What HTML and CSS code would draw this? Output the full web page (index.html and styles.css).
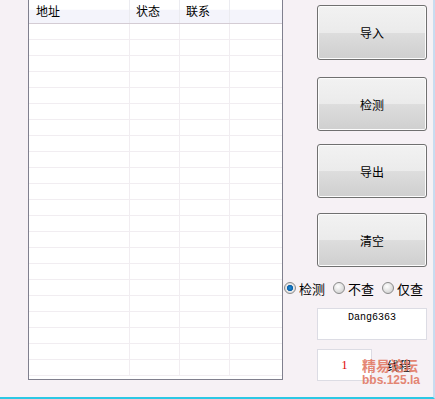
FILE: index.html
```html
<html>
<head>
<title>检测工具</title>
<link rel="stylesheet" href="styles.css">
</head>
<body>
<div class="window">
  <div class="listview">
    <div class="header">
      <div class="col c1">地址</div>
      <div class="col c2">状态</div>
      <div class="col c3">联系</div>
      <div class="col c4"></div>
    </div>
    <div class="rows" id="rows"></div>
  </div>

  <div class="panel">
    <button class="btn b1">导入</button>
    <button class="btn b2">检测</button>
    <button class="btn b3">导出</button>
    <button class="btn b4">清空</button>

    <div class="radios">
      <label class="radio"><span class="dot on"></span>检测</label>
      <label class="radio"><span class="dot"></span>不查</label>
      <label class="radio"><span class="dot"></span>仅查</label>
    </div>

    <div class="textbox">Dang6363</div>

    <div class="threadrow">
      <div class="numbox">1</div>
      <span class="label">线程</span>
    </div>
  </div>

  <div class="watermark">
    <div class="wm1">精易论坛</div>
    <div class="wm2">bbs.125.la</div>
  </div>
</div>

<script>
var rows = document.getElementById("rows");
for (var i = 0; i < 22; i++) {
  var r = document.createElement("div");
  r.className = "row";
  r.innerHTML = '<div class="cell c1"></div><div class="cell c2"></div><div class="cell c3"></div><div class="cell c4"></div>';
  rows.appendChild(r);
}
</script>
</body>
</html>
```

FILE: styles.css
```css
body {
    margin: 0;
    background: #f6f1f5;
    font-family: "Noto Sans CJK SC", sans-serif;
    font-size: 12px;
    color: #000;
}

.window {
    position: relative;
    width: 435px;
    height: 399px;
    display: flex;
    box-sizing: border-box;
    border-right: 2px solid #c8dcf0;
    border-bottom: 2px solid #2cc8e4;
    overflow: hidden;
}

.listview {
    margin-left: 28px;
    width: 255px;
    height: 380px;
    box-sizing: border-box;
    border-left: 1px solid #80808e;
    border-right: 1px solid #80808e;
    border-bottom: 1px solid #80808e;
    background: #fff;
    overflow: hidden;
}

.header {
    display: flex;
    height: 23px;
    border-bottom: 1px solid #d4ccd4;
    background: linear-gradient(#ffffff, #ffffff 40%, #f4f4fb 45%, #f4f4fb);
}

.col {
    box-sizing: border-box;
    height: 23px;
    line-height: 22px;
    padding-left: 7px;
    border-right: 1px solid #ebebf0;
}

.c1 { width: 101px; }
.c2 { width: 50px; }
.c3 { width: 50px; }
.c4 { width: 52px; border-right: none; }

.col.c1 { padding-left: 7px; }
.col.c2 { padding-left: 6px; }
.col.c3 { padding-left: 6px; }

.row {
    display: flex;
    height: 16px;
    border-bottom: 1px solid #f1edf1;
    box-sizing: border-box;
}

.cell {
    box-sizing: border-box;
    height: 15px;
    border-right: 1px solid #f1edf1;
}

.cell.c4 { border-right: none; }

.panel {
    margin-left: 34px;
    width: 110px;
    display: flex;
    flex-direction: column;
}

.btn {
    width: 110px;
    height: 54px;
    border: 1px solid #707070;
    border-radius: 3px;
    background: linear-gradient(#f2f2f2, #ebebeb 50%, #dddddd 51%, #cfcfcf);
    box-shadow: inset 0 0 0 1px #fcfcfc;
    font-family: "Noto Sans CJK SC", sans-serif;
    font-size: 12px;
    color: #000;
    padding: 0;
}

.b1 { margin-top: 5px; height: 55px; }
.b2 { margin-top: 17px; }
.b3 { margin-top: 13px; }
.b4 { margin-top: 15px; }

.radios {
    display: flex;
    margin-left: -33px;
    margin-top: 13px;
    height: 16px;
    align-items: center;
    white-space: nowrap;
}

.radio {
    display: flex;
    align-items: center;
    margin-right: 8px;
    font-size: 13px;
}

.dot {
    display: inline-block;
    width: 12px;
    height: 12px;
    border-radius: 50%;
    border: 1px solid #8a8a8a;
    background: radial-gradient(circle at 40% 35%, #ffffff, #d8d8d8 70%);
    margin-right: 3px;
    box-sizing: border-box;
}

.dot.on {
    background: radial-gradient(circle, #1d8fd8 0, #0a5ea8 2.8px, #eaeaea 3.4px, #cfcfcf);
}

.textbox {
    margin-top: 12px;
    height: 32px;
    box-sizing: border-box;
    border: 1px solid #dcdce4;
    background: #fff;
    font-family: "Liberation Mono", monospace;
    font-size: 10px;
    text-align: center;
    padding-top: 3px;
}

.threadrow {
    display: flex;
    align-items: center;
    margin-top: 9px;
}

.numbox {
    width: 55px;
    height: 32px;
    box-sizing: border-box;
    border: 1px solid #dcdce4;
    background: #fff;
    color: #e00000;
    font-family: "Liberation Serif", serif;
    font-size: 12px;
    text-align: center;
    line-height: 30px;
}

.label {
    margin-left: 15px;
    font-size: 12px;
}

.watermark {
    position: absolute;
    left: 362px;
    top: 357px;
    color: #e27a66;
    opacity: 0.9;
    font-family: "Liberation Sans", sans-serif;
    font-weight: bold;
}

.wm1 {
    font-family: "Noto Sans CJK SC", sans-serif;
    font-size: 14px;
    line-height: 17px;
}

.wm2 {
    font-size: 12px;
    line-height: 13px;
}
```
